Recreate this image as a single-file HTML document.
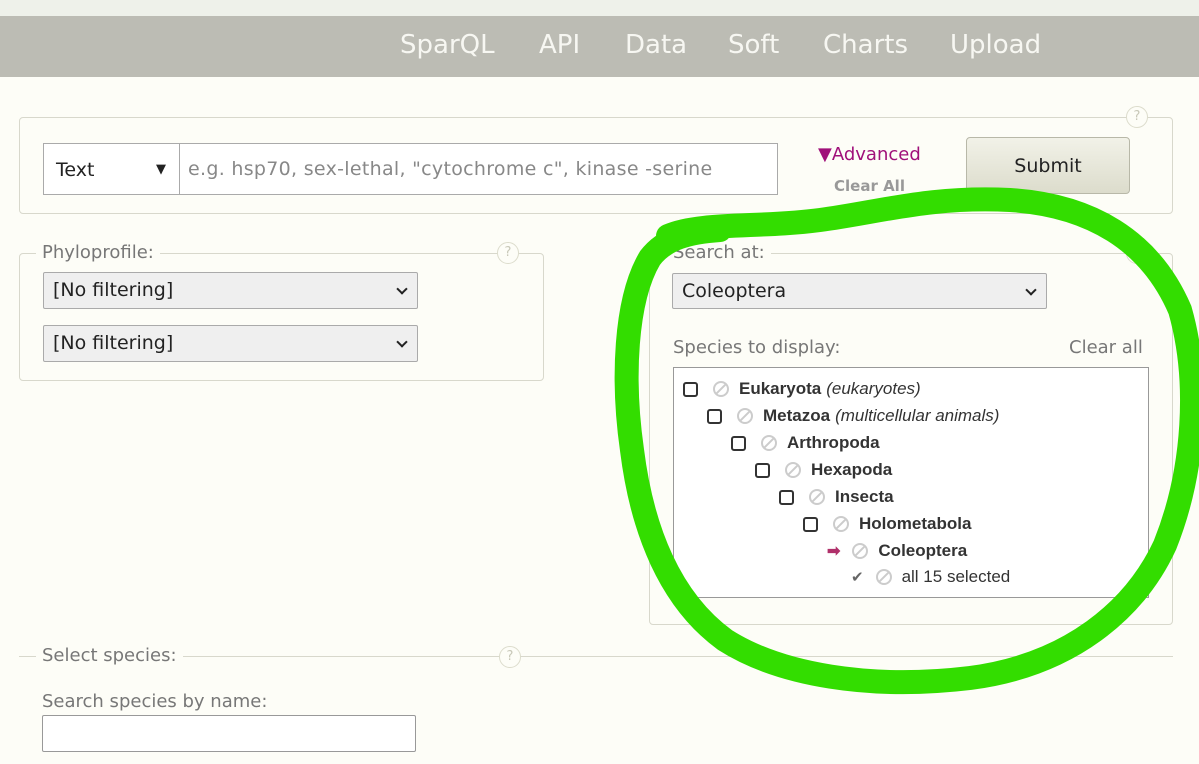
<!DOCTYPE html>
<html><head><meta charset="utf-8"><style>
*{box-sizing:border-box;margin:0;padding:0}
body{width:1199px;height:764px;overflow:hidden;background:#fdfdf7;font-family:"DejaVu Sans","Liberation Sans",sans-serif;position:relative;color:#333}
.a{position:absolute}
.top{left:0;top:0;width:1199px;height:16px;background:#eef1ea}
.nav{left:0;top:16px;width:1199px;height:61px;background:#bcbcb4}
.nav span{position:absolute;top:14px;font-size:26px;color:#f7f7f2}
.box{border:1px solid #d8d8cc;border-radius:4px}
.q{width:22px;height:22px;border-radius:50%;border:1px solid #dcdccc;background:#fdfdf7;color:#c8c8b8;font-size:13px;text-align:center;line-height:20px}
.lbl{font-size:18px;color:#777;background:#fdfdf7;padding:0 6px}
.sel{background:#efefef;border:1px solid #aaa;border-radius:2px;font-size:19px;color:#222;padding-left:9px;line-height:34px}
.chev{position:absolute;right:11px;top:12px;width:8px;height:8px;border-right:2px solid #222;border-bottom:2px solid #222;transform:rotate(45deg)}
.tr{position:absolute;font-family:"Liberation Sans",sans-serif;font-size:17px;font-weight:bold;color:#333;white-space:nowrap;display:flex;align-items:center}
.cb{width:15px;height:15px;border:2px solid #333;border-radius:3px;margin-right:15px}
.no{width:16px;height:16px;border:2px solid #ccc;border-radius:50%;margin-right:10px;position:relative}
.no:after{content:"";position:absolute;left:5px;top:-1px;width:2px;height:14px;background:#ccc;transform:rotate(45deg)}
.tr i{font-weight:normal;margin-left:5px}
</style></head><body>
<div class="a top"></div>
<div class="a nav">
<span style="left:400px">SparQL</span><span style="left:539px">API</span><span style="left:625px">Data</span><span style="left:728px">Soft</span><span style="left:823px">Charts</span><span style="left:950px">Upload</span>
</div>

<div class="a box" style="left:19px;top:117px;width:1154px;height:97px"></div>
<div class="a q" style="left:1126px;top:106px">?</div>
<div class="a" style="left:43px;top:143px;width:735px;height:52px;border:1px solid #aaa;background:#fff"></div>
<div class="a" style="left:43px;top:143px;width:137px;height:52px;border:1px solid #aaa;background:#fff;font-size:19px;line-height:52px;padding-left:12px;color:#222">Text<span style="position:absolute;left:112px;font-size:13px">▼</span></div>
<div class="a" style="left:188px;top:158px;font-size:19px;color:#888;letter-spacing:0.3px">e.g. hsp70, sex-lethal, "cytochrome c", kinase -serine</div>
<div class="a" style="left:818px;top:144px;font-size:18px;color:#a0107a">▼Advanced</div>
<div class="a" style="left:834px;top:177px;font-size:15px;font-weight:bold;color:#999">Clear All</div>
<div class="a" style="left:966px;top:137px;width:164px;height:57px;border:1px solid #b8b8a8;border-radius:4px;background:linear-gradient(#f2f2e8,#dcdccc);font-size:19px;text-align:center;line-height:57px;color:#222">Submit</div>

<div class="a box" style="left:19px;top:253px;width:525px;height:128px"></div>
<div class="a lbl" style="left:36px;top:242px">Phyloprofile:</div>
<div class="a q" style="left:497px;top:242px">?</div>
<div class="a sel" style="left:43px;top:272px;width:375px;height:37px">[No filtering]<div class="chev"></div></div>
<div class="a sel" style="left:43px;top:325px;width:375px;height:37px">[No filtering]<div class="chev"></div></div>

<div class="a box" style="left:649px;top:253px;width:524px;height:372px"></div>
<div class="a lbl" style="left:667px;top:242px">Search at:</div>
<div class="a q" style="left:1126px;top:242px">?</div>
<div class="a sel" style="left:672px;top:273px;width:375px;height:36px">Coleoptera<div class="chev"></div></div>
<div class="a" style="left:673px;top:337px;font-size:18px;color:#777">Species to display:</div>
<div class="a" style="left:1069px;top:337px;font-size:18px;color:#777">Clear all</div>
<div class="a" style="left:673px;top:367px;width:476px;height:231px;border:1px solid #999;background:#fff"></div>
<div class="tr" style="left:683px;top:379px"><div class="cb"></div><div class="no"></div>Eukaryota<i>(eukaryotes)</i></div>
<div class="tr" style="left:707px;top:406px"><div class="cb"></div><div class="no"></div>Metazoa<i>(multicellular animals)</i></div>
<div class="tr" style="left:731px;top:433px"><div class="cb"></div><div class="no"></div>Arthropoda</div>
<div class="tr" style="left:755px;top:460px"><div class="cb"></div><div class="no"></div>Hexapoda</div>
<div class="tr" style="left:779px;top:487px"><div class="cb"></div><div class="no"></div>Insecta</div>
<div class="tr" style="left:803px;top:514px"><div class="cb"></div><div class="no"></div>Holometabola</div>
<div class="tr" style="left:827px;top:541px"><span style="color:#b0306a;font-size:16px;margin-right:12px">➡</span><div class="no"></div>Coleoptera</div>
<div class="tr" style="left:851px;top:567px;font-weight:normal"><span style="color:#666;font-size:15px;margin-right:12px">✔</span><div class="no"></div>all 15 selected</div>

<div class="a" style="left:19px;top:656px;width:1154px;height:1px;background:#d8d8cc"></div>
<div class="a lbl" style="left:36px;top:645px">Select species:</div>
<div class="a q" style="left:499px;top:646px">?</div>
<div class="a" style="left:42px;top:691px;font-size:18px;color:#777">Search species by name:</div>
<div class="a" style="left:42px;top:715px;width:374px;height:37px;border:1px solid #999;border-radius:2px;background:#fff"></div>

<svg class="a" style="left:0;top:0" width="1199" height="764"><path d="M668,236 C700,222 760,228 820,220 C880,212 930,196 1010,200 C1090,205 1150,240 1180,310 C1200,380 1195,470 1165,545 C1135,610 1070,665 970,678 C870,690 780,675 725,640 C670,600 642,530 632,450 C622,380 625,300 650,258 C665,238 690,232 720,230" fill="none" stroke="#33dd00" stroke-width="24" stroke-linecap="round"/></svg>
</body></html>
